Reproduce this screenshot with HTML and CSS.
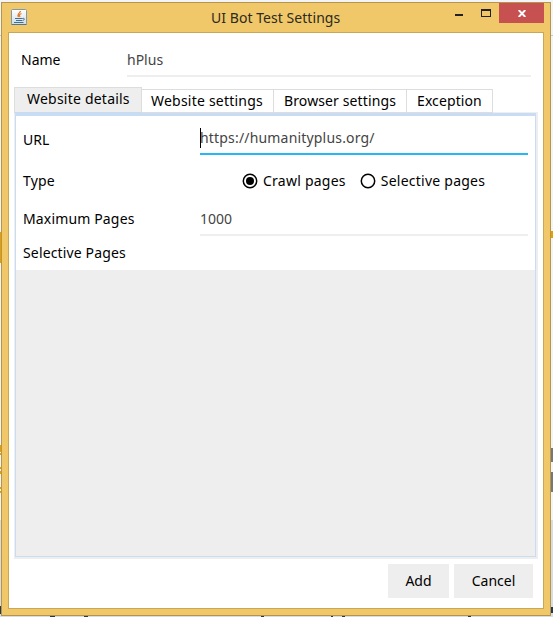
FILE: index.html
```
<!DOCTYPE html>
<html lang="en">
<head>
<meta charset="utf-8">
<title>UI Bot Test Settings</title>
<link rel="stylesheet" href="styles.css">
</head>
<body>
<svg class="desktop" width="553" height="617" shape-rendering="crispEdges">
  <path fill="#c8cacd" d="M0 35h1v1H0zM551 35h2v1h-2z"/>
  <path fill="#e5a000" d="M0 232h1v31H0zM551 231h2v7h-2zM0 445h1v7H0zM0 453h1v2H0zM0 467h1v2H0zM0 471h1v3H0zM0 487h1v2H0zM0 491h1v2H0z"/>
  <path fill="#777" d="M551 448h2v14h-2zM551 472h2v20h-2z"/>
  <path fill="#d9dde1" d="M0 520h1v97H0zM0 616h553v1H0zM551 520h2v97h-2z"/>
  <path fill="#263850" d="M0 606h1v8H0zM551 607h2v6h-2zM50 616h5v1h-5zM84 616h4v1h-4zM261 616h3v1h-3zM331 616h2v1h-2zM342 616h3v1h-3zM468 616h3v1h-3z"/>
</svg>
<div class="window">
  <header class="titlebar">
    <svg class="app-icon" width="16" height="16" viewBox="0 0 16 16">
      <defs><linearGradient id="g" x2="0" y2="1"><stop stop-color="#fff"/><stop offset="1" stop-color="#cfdce6"/></linearGradient></defs>
      <rect x=".5" y=".5" width="15" height="15" rx="1" fill="url(#g)" stroke="#8298a8"/>
      <path d="M.5 15.5h15" stroke="#53758c"/>
      <path d="M9.5 2C9.5 4 5.500 4.500 7.500 8M10.500 4.500C8 5.500 8 6.500 9 8" fill="none" stroke="#e57a2b" stroke-width="1.300"/>
      <path d="M4 9.500h7.500M5 11.500h6M3 13.500h9.500M11.500 9.500c2.500-.8 2.500 1.500 0 2" fill="none" stroke="#426f91"/>
    </svg>
    <h1 class="title">UI Bot Test Settings</h1>
    <svg class="sys" width="38" height="20" shape-rendering="crispEdges"><path fill="#222" d="M0 11h8v2H0zM26 6h10v8H26zm1 2v5h8V8z" fill-rule="evenodd"/></svg>
    <div class="close"><svg width="8" height="7" viewBox="0 0 8 7"><path d="M.7 0l6.600 7M7.300 0L.7 7" stroke="#fff" stroke-width="1.900"/></svg></div>
  </header>
  <main class="client">
    <div class="name-row"><label>Name</label><div class="field">hPlus</div></div>
    <nav class="tabs">
      <div class="tab selected">Website details</div>
      <div class="tab settings">Website settings</div>
      <div class="tab browser">Browser settings</div>
      <div class="tab exception">Exception</div>
    </nav>
    <section class="pane">
      <div class="form">
        <div class="row url"><label>URL</label><div class="field focused"><span class="caret"></span>https://humanityplus.org/</div></div>
        <div class="row type"><label>Type</label>
          <div class="radios">
            <div class="radio"><svg width="16" height="16"><circle cx="8" cy="8" r="6.700" fill="none" stroke="#000" stroke-width="1.500"/><circle cx="8" cy="8" r="4"/></svg><span>Crawl pages</span></div>
            <div class="radio"><svg width="16" height="16"><circle cx="8" cy="8" r="6.700" fill="none" stroke="#000" stroke-width="1.500"/></svg><span>Selective pages</span></div>
          </div>
        </div>
        <div class="row max"><label>Maximum Pages</label><div class="field">1000</div></div>
        <div class="row selective"><label>Selective Pages</label></div>
      </div>
      <div class="list"></div>
    </section>
    <footer class="actions"><div class="button add">Add</div><div class="button cancel">Cancel</div></footer>
  </main>
</div>
</body>
</html>
```
FILE: styles.css
```
* { box-sizing: border-box; }
body {
  margin: 0;
  padding: 2px 0 0 1px;
  height: 617px;
  overflow: hidden;
  background: #f3f4f6;
  font: 14px/20px "Noto Sans", sans-serif;
  color: #000;
  white-space: nowrap;
}
svg { display: block; }
.desktop { position: absolute; left: 0; top: 0; z-index: -1; }
.window {
  width: 550px;
  height: 614px;
  padding: 0 6px 6px;
  border: 1px solid #b5954c;
  background: #f0c869;
}
.titlebar { display: flex; height: 29px; }
.app-icon { margin: 6px 0 0 3px; }
.title {
  width: 130px;
  margin: 5px 0 0 184px;
  font-size: 14px;
  font-weight: 400;
  line-height: 20px;
  letter-spacing: 0.05px;
  color: #2d2a20;
}
.sys { margin-left: 114px; }
.close {
  display: grid;
  place-items: center;
  width: 45px;
  height: 20px;
  margin-left: 6px;
  background: #c75050;
}
.client {
  height: 577px;
  border: 1px solid #c9a755;
  background: #fff;
}
.name-row { display: flex; height: 44px; padding: 17px 0 0 12px; }
.name-row label { width: 106px; }
.name-row .field { width: 404px; height: 27px; }
.field { border-bottom: 2px solid #eee; color: #444; }
.tabs { display: flex; align-items: flex-end; height: 36px; padding-left: 5px; }
.tab {
  height: 24px;
  border: 1px solid #ddd;
  border-left: 0;
  padding: 1px 0 0 9px;
  letter-spacing: 0.22px;
}
.tab.selected {
  width: 128px;
  height: 26px;
  padding-left: 12px;
  border-left: 1px solid #ddd;
  border-bottom-color: #c8dcf0;
  background: #eee;
}
.settings { width: 132px; }
.browser { width: 133px; padding-left: 10px; letter-spacing: 0.12px; }
.exception { width: 86px; padding-left: 10px; letter-spacing: 0.1px; }
.pane {
  width: 524px;
  height: 447px;
  margin: -1px 0 0 5px;
  border: solid #eee;
  border-width: 1px 2px 2px 1px;
}
.form {
  height: 157px;
  border: solid #c8dcf4;
  border-width: 3px 1px 0;
  letter-spacing: 0.15px;
}
.list { height: 287px; border: solid #c8dcf4; border-width: 0 1px 1px; background: #eee; }
.row { display: flex; padding-left: 7px; }
.row label { width: 177px; }
.row .field { width: 328px; }
.url { height: 39px; padding-top: 12px; }
.url label { padding-top: 2px; letter-spacing: 0; }
.focused { position: relative; height: 27px; border-color: #29b6f6; letter-spacing: 0.18px; }
.caret { position: absolute; left: 0; top: 0; width: 1px; height: 20px; background: #000; }
.type { padding-top: 16px; height: 54px; }
.radios { display: flex; gap: 14px; padding-left: 42px; letter-spacing: 0.24px; }
.radio { display: flex; gap: 5px; }
.radio svg { margin-top: 2px; }
.max { height: 27px; }
.max .field { height: 27px; letter-spacing: 0; }
.selective { padding-top: 7px; }
.actions { display: flex; gap: 5px; padding: 5px 0 0 379px; }
.button { height: 34px; padding-top: 7px; text-align: center; background: #eee; }
.add { width: 61px; }
.cancel { width: 79px; }
```
